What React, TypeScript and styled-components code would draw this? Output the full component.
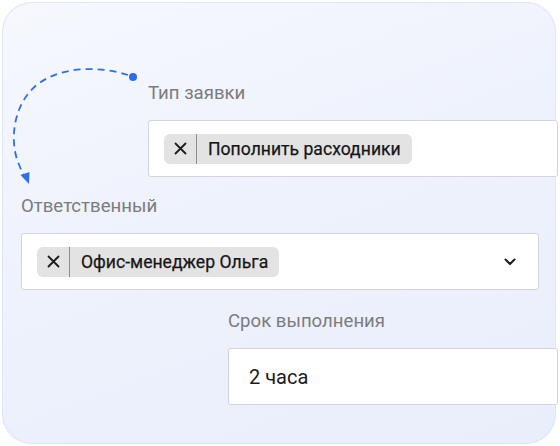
import React from "react";
import styled, { createGlobalStyle } from "styled-components";

const GlobalStyle = createGlobalStyle`
  html, body {
    margin: 0;
    padding: 0;
    background: #ffffff;
  }
  body {
    font-family: Roboto, "Noto Sans", "Liberation Sans", sans-serif;
    -webkit-font-smoothing: antialiased;
  }
`;

const Page = styled.div`
  width: 560px;
  height: 446px;
  padding: 2px 4px 2px 2px;
  box-sizing: border-box;
`;

const Card = styled.div`
  position: relative;
  width: 554px;
  height: 442px;
  box-sizing: border-box;
  border-radius: 30px;
  background: linear-gradient(160deg, #f6f8fe 0%, #eef2fc 45%, #e9eefb 100%);
  box-shadow: inset 0 0 0 1px #dfe6f6;
  padding-top: 80px;
  display: flex;
  flex-direction: column;
`;

const Trail = styled.svg`
  position: absolute;
  left: 0;
  top: 0;
  pointer-events: none;
`;

const Field = styled.div<{ $indent: number; $gap: number }>`
  display: flex;
  flex-direction: column;
  margin-left: ${(p) => p.$indent}px;
  margin-top: ${(p) => p.$gap}px;
`;

const Label = styled.div`
  font-size: 18.6px;
  line-height: 22px;
  color: #7b7c7e;
  font-weight: 400;
`;

const Box = styled.div<{ $width: number }>`
  width: ${(p) => p.$width}px;
  height: 57px;
  margin-top: 16px;
  box-sizing: border-box;
  background: #ffffff;
  border: 1px solid #d3d5da;
  border-radius: 3px;
  display: flex;
  align-items: center;
  padding: 0 22px 0 15px;
`;

const Value = styled.span`
  font-size: 20px;
  color: #1b1b1b;
  padding-left: 5px;
`;

const Chip = styled.div`
  height: 30px;
  display: flex;
  align-items: stretch;
  background: #e3e3e4;
  border-radius: 6px;
  overflow: hidden;
`;

const ChipClose = styled.span`
  width: 32px;
  display: flex;
  align-items: center;
  justify-content: center;
  border-right: 1px solid #8d8d8f;
`;

const ChipText = styled.span`
  display: flex;
  align-items: center;
  padding: 0 11px 0 11px;
  font-size: 17.6px;
  font-weight: 400;
  color: #161616;
  -webkit-text-stroke: 0.25px #161616;
`;

const Chevron = styled.svg`
  margin-left: auto;
`;

const Cross = () => (
  <svg width="13" height="13" viewBox="0 0 13 13">
    <path d="M1.5 1.5 L11.5 11.5 M11.5 1.5 L1.5 11.5" stroke="#1c1c1c" strokeWidth="1.8" strokeLinecap="round" />
  </svg>
);

const Tag = ({ children }: { children: React.ReactNode }) => (
  <Chip>
    <ChipClose>
      <Cross />
    </ChipClose>
    <ChipText>{children}</ChipText>
  </Chip>
);

export default function App() {
  return (
    <>
      <GlobalStyle />
      <Page>
        <Card>
          <Trail width="160" height="200" viewBox="0 0 160 200">
            <path
              d="M126 73 C 98 64, 60 64, 36 82 C 10 102, 8 140, 16 160 C 19 168, 21 172, 23 176"
              fill="none"
              stroke="#2f6ee6"
              strokeWidth="1.8"
              strokeDasharray="7 5"
            />
            <circle cx="131" cy="75" r="4" fill="#2f6ee6" />
            <path d="M18.5 173 L27 182 L27.5 170 Z" fill="#2f6ee6" />
          </Trail>

          <Field $indent={146} $gap={0}>
            <Label>Тип заявки</Label>
            <Box $width={410}>
              <Tag>Пополнить расходники</Tag>
            </Box>
          </Field>

          <Field $indent={19} $gap={18}>
            <Label>Ответственный</Label>
            <Box $width={518}>
              <Tag>Офис-менеджер Ольга</Tag>
              <Chevron width="12" height="8" viewBox="0 0 12 8">
                <path d="M1.5 1.5 L6 6 L10.5 1.5" fill="none" stroke="#1c1c1c" strokeWidth="2" strokeLinecap="round" strokeLinejoin="round" />
              </Chevron>
            </Box>
          </Field>

          <Field $indent={226} $gap={20}>
            <Label>Срок выполнения</Label>
            <Box $width={330}>
              <Value>2 часа</Value>
            </Box>
          </Field>
        </Card>
      </Page>
    </>
  );
}
